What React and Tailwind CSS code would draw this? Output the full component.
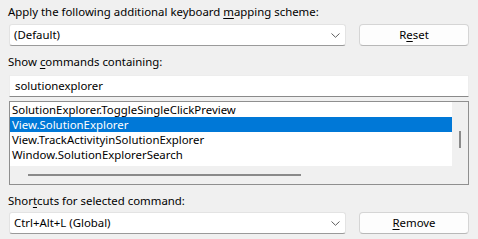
const commands = [
  "SolutionExplorer.ToggleSingleClickPreview",
  "View.SolutionExplorer",
  "View.TrackActivityinSolutionExplorer",
  "Window.SolutionExplorerSearch",
];

function Combo({ value }) {
  return (
    <div className="flex h-[22px] w-[337px] items-center justify-between rounded-[3px] border border-[#e3e3e3] border-b-[#9a9a9a] bg-white pl-[4px] pr-[5px]">
      <span className="leading-[16px]">{value}</span>
      <svg width="9" height="5" viewBox="0 0 9 5" className="text-[#5f5f5f]">
        <path d="M0.5 0.5 L4.5 4.3 L8.5 0.5" fill="none" stroke="currentColor" strokeWidth="1" />
      </svg>
    </div>
  );
}

function Button({ children }) {
  return (
    <div className="flex h-[22px] w-[110px] items-center justify-center rounded-[4px] border border-[#d5d5d5] border-b-[#b8b8b8] bg-[#fdfdfd] leading-[16px]">
      {children}
    </div>
  );
}

export default function App() {
  return (
    <main
      className="flex h-[239px] w-[478px] flex-col bg-[#f0f0f0] pl-[9px] pr-[9px] pt-[4px] text-[11.4px] text-black"
      style={{ fontFamily: '"Noto Sans", sans-serif' }}
    >
      <div className="-ml-[1px] leading-[16px]">
        Apply the following additional keyboard <u className="underline-offset-2">m</u>apping scheme:
      </div>
      <div className="mt-[4px] flex gap-[13px]">
        <Combo value="(Default)" />
        <Button>
          R<u className="underline-offset-2">e</u>set
        </Button>
      </div>

      <div className="-ml-[1px] mt-[8px] leading-[16px]">
        Show <u className="underline-offset-2">c</u>ommands containing:
      </div>
      <div className="mt-[5px] flex h-[22px] items-center border border-[#ededed] border-b-[#8a8a8a] bg-white pl-[5px] leading-[16px]">
        solutionexplorer
      </div>

      <div className="mt-[4px] flex h-[84px] flex-col border border-[#8f8f8f] bg-[#f0f0f0]">
        <div className="flex h-[64px]">
          <div className="flex flex-1 flex-col bg-white">
            {commands.map((c, i) => (
              <div
                key={c}
                className={`h-[15px] pl-[2px] leading-[15px] ${
                  i === 1 ? "bg-[#0078d7] text-white" : ""
                }`}
              >
                {c}
              </div>
            ))}
          </div>
          <div className="flex w-[16px] justify-center pt-[29px]">
            <div className="h-[17px] w-[2px] bg-[#8a8a8a]" />
          </div>
        </div>
        <div className="flex flex-1 items-center pl-[18px]">
          <div className="h-[2px] w-[273px] bg-[#8a8a8a]" />
        </div>
      </div>

      <div className="-ml-[1px] mt-[8px] leading-[16px]">
        Shor<u className="underline-offset-2">t</u>cuts for selected command:
      </div>
      <div className="mt-[3px] flex gap-[13px]">
        <Combo value="Ctrl+Alt+L (Global)" />
        <Button>
          <u className="underline-offset-2">R</u>emove
        </Button>
      </div>
    </main>
  );
}
